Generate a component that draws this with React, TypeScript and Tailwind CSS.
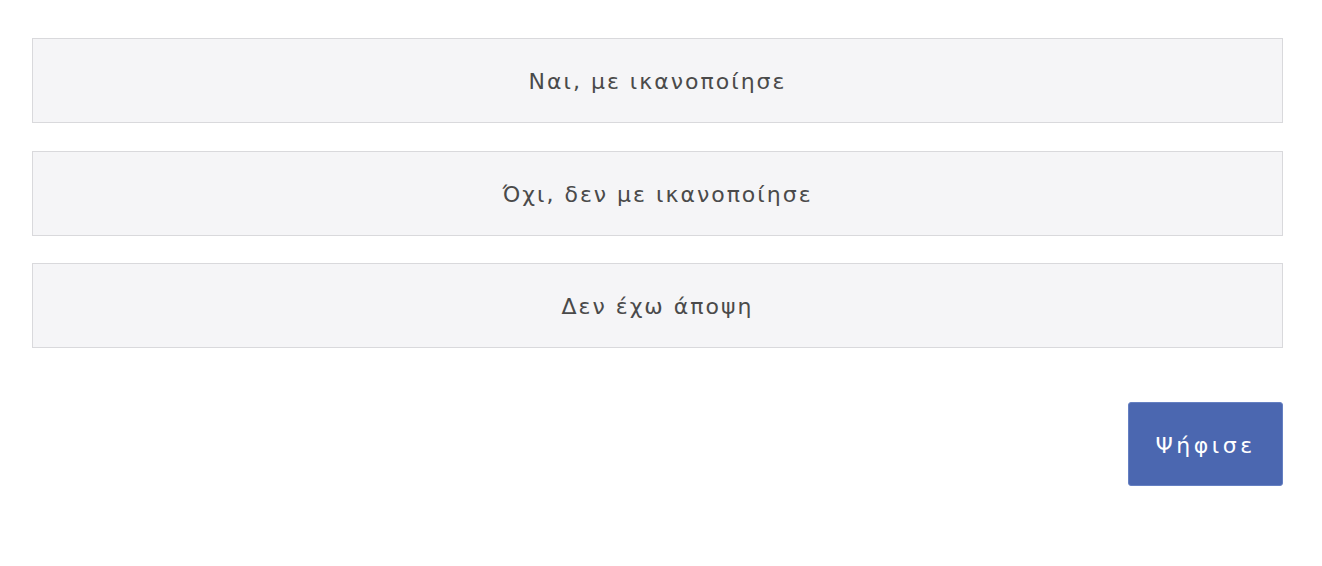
const options = ["Ναι, με ικανοποίησε", "Όχι, δεν με ικανοποίησε", "Δεν έχω άποψη"];

export default function App() {
  return (
    <div
      className="min-h-screen bg-white pl-[32px] pr-[39px] pt-[38px]"
      style={{ fontFamily: "'DejaVu Sans', 'Noto Sans', sans-serif" }}
    >
      <div className="flex flex-col gap-[27.5px]">
        {options.map((label) => (
          <button
            key={label}
            className="h-[85px] w-full border border-[#d9d9dc] bg-[#f5f5f7] pt-[2px] text-[22px] tracking-[2px] text-[#4a4a4a]"
          >
            {label}
          </button>
        ))}
      </div>
      <div className="mt-[54px] flex justify-end">
        <button className="h-[84px] w-[155px] rounded-[3px] border border-[#6580c2] bg-[#4b67b0] pt-[2px] text-[22px] tracking-[3.5px] text-white">
          Ψήφισε
        </button>
      </div>
    </div>
  );
}
